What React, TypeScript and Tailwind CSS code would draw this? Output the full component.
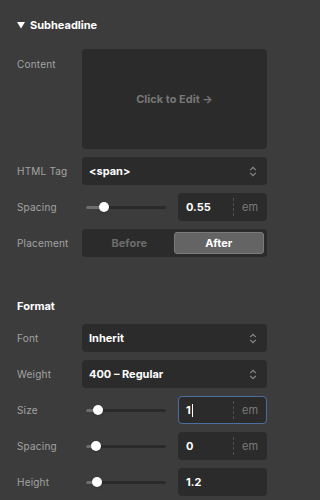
import { ReactNode } from 'react'

function Chevrons() {
  return (
    <svg width="8" height="11" viewBox="0 0 8 11" fill="none" className="text-[#8a8a8a]">
      <path d="M1.2 4.2 L4 1.4 L6.8 4.2" stroke="currentColor" strokeWidth="1.2" />
      <path d="M1.2 6.8 L4 9.6 L6.8 6.8" stroke="currentColor" strokeWidth="1.2" />
    </svg>
  )
}

function Row({ label, children }: { label: string; children: ReactNode }) {
  return (
    <div className="flex items-center h-[28px]">
      <div className="w-[65px] shrink-0 text-[10px] tracking-[0.2px] text-[#a3a3a3]">{label}</div>
      <div className="flex-1 min-w-0 h-full">{children}</div>
    </div>
  )
}

function Select({ value }: { value: string }) {
  return (
    <div className="h-full rounded-[4px] bg-[#2b2b2b] flex items-center justify-between pl-[7px] pr-[10px]">
      <span className="text-[11px] font-bold text-white">{value}</span>
      <Chevrons />
    </div>
  )
}

function Slider({ pos }: { pos: number }) {
  return (
    <div className="relative h-full w-[88px] flex items-center pl-[4px]">
      <div className="h-[3px] w-[80px] bg-[#2a2a2a] rounded-full relative">
        <div className="absolute left-0 top-0 h-full bg-[#6e6e6e] rounded-full" style={{ width: pos }} />
        <div
          className="absolute top-1/2 -translate-y-1/2 -translate-x-1/2 w-[10px] h-[10px] rounded-full bg-white shadow"
          style={{ left: pos }}
        />
      </div>
    </div>
  )
}

function NumInput({ value, unit, focused }: { value: string; unit?: string; focused?: boolean }) {
  return (
    <div
      className={`h-full rounded-[4px] bg-[#2b2b2b] flex items-center ${
        focused ? 'border border-[#4c6e9c]' : 'border border-transparent'
      }`}
    >
      <span className="flex-1 pl-[7px] text-[11px] font-bold text-white flex items-center">
        {value}
        {focused && <span className="inline-block w-[1px] h-[13px] bg-white ml-[1px]" />}
      </span>
      {unit && (
        <>
          <div className="h-[18px] border-l border-dashed border-[#505050]" />
          <span className="w-[32px] text-center text-[11px] text-[#7a7a7a]">{unit}</span>
        </>
      )}
    </div>
  )
}

function SliderRow({ label, pos, value, unit, focused }: { label: string; pos: number; value: string; unit?: string; focused?: boolean }) {
  return (
    <Row label={label}>
      <div className="flex h-full gap-[8px]">
        <Slider pos={pos} />
        <div className="flex-1">
          <NumInput value={value} unit={unit} focused={focused} />
        </div>
      </div>
    </Row>
  )
}

export default function App() {
  return (
    <div
      className="w-full min-w-[284px] h-[500px] bg-[#3c3c3c] overflow-hidden"
      style={{ fontFamily: 'Inter, "Noto Sans", sans-serif' }}
    >
      <div className="w-[284px] px-[17px]">
        <div className="flex items-center gap-[5px] pt-[18px] h-[33px]">
          <svg width="8" height="7" viewBox="0 0 8 7" className="text-white">
            <path d="M0 0 H8 L4 6.5 Z" fill="currentColor" />
          </svg>
          <span className="text-[11px] font-bold text-white">Subheadline</span>
        </div>

        <div className="mt-[16px] flex flex-col gap-[8px]">
          <div className="flex">
            <div className="w-[65px] shrink-0 text-[10px] tracking-[0.2px] text-[#a3a3a3] pt-[8px]">Content</div>
            <div className="flex-1 h-[100px] rounded-[4px] bg-[#2b2b2b] flex items-center justify-center">
              <span className="text-[11px] font-bold text-[#777777]">Click to Edit →</span>
            </div>
          </div>

          <Row label="HTML Tag">
            <Select value="<span>" />
          </Row>

          <SliderRow label="Spacing" pos={18} value="0.55" unit="em" />

          <Row label="Placement">
            <div className="h-full rounded-[4px] bg-[#2b2b2b] p-[3px] flex">
              <div className="flex-1 flex items-center justify-center text-[11px] font-bold text-[#6c6c6c]">Before</div>
              <div className="flex-1 flex items-center justify-center rounded-[3px] bg-[#646464] border border-[#7a7a7a] text-[11px] font-bold text-white">
                After
              </div>
            </div>
          </Row>
        </div>

        <div className="mt-[41px] text-[11px] font-bold text-white h-[16px] leading-[16px]">Format</div>

        <div className="mt-[10px] flex flex-col gap-[8px]">
          <Row label="Font">
            <Select value="Inherit" />
          </Row>
          <Row label="Weight">
            <Select value="400 – Regular" />
          </Row>
          <SliderRow label="Size" pos={12} value="1" unit="em" focused />
          <SliderRow label="Spacing" pos={10} value="0" unit="em" />
          <SliderRow label="Height" pos={11} value="1.2" />
        </div>
      </div>
    </div>
  )
}
